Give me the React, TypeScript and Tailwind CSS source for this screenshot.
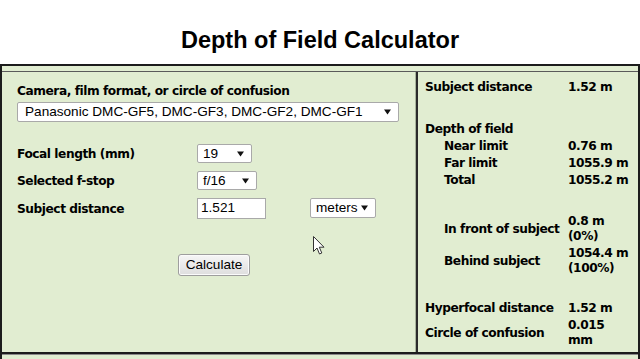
import React from 'react'

const label = "font-['DejaVu_Sans','Verdana',sans-serif] font-bold text-[12.2px] tracking-[-0.45px] text-black"
const ctl = "font-['Liberation_Sans','Arial',sans-serif] font-normal text-[13.6px] tracking-normal text-black"

function Arrow() {
  return (
    <svg width="7" height="6" viewBox="0 0 7 6" className="shrink-0">
      <path d="M0 0.5 H7 L3.5 5.5 Z" fill="#111" />
    </svg>
  )
}

function FakeSelect({ value, w, pl = 5 }: { value: string; w: string; pl?: number }) {
  return (
    <div
      className={`${ctl} ${w} h-full flex items-center justify-between bg-white border border-[#a9a9a9] rounded-[2px] pr-[7px] leading-none`}
      style={{ paddingLeft: pl }}
    >
      <span className="whitespace-nowrap">{value}</span>
      <Arrow />
    </div>
  )
}

function Row({ name, value, indent, h = 'h-[17px]' }: { name: string; value: React.ReactNode; indent?: boolean; h?: string }) {
  return (
    <div className={`flex items-center ${h}`}>
      <div className={`w-[143px] whitespace-nowrap ${indent ? 'pl-[19px]' : ''}`}>{name}</div>
      <div className="leading-[15px] whitespace-nowrap">{value}</div>
    </div>
  )
}

export default function App() {
  return (
    <div className="relative w-[640px] h-[359px] bg-white overflow-hidden">
      {/* 제목 */}
      <div className="h-[64px] pt-[27px] text-center font-['Liberation_Sans','Arial',sans-serif] font-bold text-[23.5px] leading-[26px] text-black">
        Depth of Field Calculator
      </div>

      {/* 계산기 표 */}
      <div className="h-[295px] bg-[#e1edd1] border-x-2 border-t-2 border-[#1c1c1c]">
        <div className="h-[5px]" />
        <div className="h-px bg-[#5a5a5a]" />
        <div className="flex h-[280px]">
          {/* 입력 영역 */}
          <div className={`${label} w-[414px] border-r border-[#a8b49c] pl-[15px] pt-[10px]`}>
            <div className="leading-[16px] pt-[1px] h-[16px]">Camera, film format, or circle of confusion</div>
            <div className="mt-[4px] h-[20px]">
              <FakeSelect value="Panasonic DMC-GF5, DMC-GF3, DMC-GF2, DMC-GF1" w="w-[382px]" pl={7} />
            </div>

            <div className="mt-[22px] flex items-center h-[19px]">
              <div className="w-[180px] pt-[1px]">Focal length (mm)</div>
              <FakeSelect value="19" w="w-[55px]" />
            </div>
            <div className="mt-[8px] flex items-center h-[19px]">
              <div className="w-[180px] pt-[2px]">Selected f-stop</div>
              <FakeSelect value="f/16" w="w-[60px]" />
            </div>
            <div className="mt-[8px] flex items-center h-[21px]">
              <div className="w-[180px] pt-[2px]">Subject distance</div>
              <div className={`${ctl} w-[69px] h-full flex items-center bg-white border border-[#a9a9a9] pl-[3px]`}>1.521</div>
              <div className="ml-[44px] h-[20px] self-start">
                <FakeSelect value="meters" w="w-[66px]" />
              </div>
            </div>

            <div className="mt-[35px] pl-[161px]">
              <button className={`${ctl} w-[72px] h-[22px] rounded-[3px] border border-[#9e9e9e] bg-gradient-to-b from-[#f6f6f6] to-[#dedede] shadow-[inset_0_0_0_1px_#fbfbfb]`}>
                Calculate
              </button>
            </div>
          </div>

          {/* 결과 영역 */}
          <div className={`${label} flex-1 border-l-2 border-[#2a2a2a] pl-[7px] pt-[7px]`}>
            <Row name="Subject distance" value="1.52 m" />
            <div className="h-[24px]" />
            <Row name="Depth of field" value="" h="h-[18px]" />
            <Row name="Near limit" value="0.76 m" indent />
            <Row name="Far limit" value="1055.9 m" indent />
            <Row name="Total" value="1055.2 m" indent />
            <div className="h-[24px]" />
            <Row name="In front of subject" value={<>0.8 m<br />(0%)</>} indent h="h-[32px]" />
            <Row name="Behind subject" value={<>1054.4 m<br />(100%)</>} indent h="h-[32px]" />
            <div className="h-[23px]" />
            <Row name="Hyperfocal distance" value="1.52 m" />
            <Row name="Circle of confusion" value={<>0.015<br />mm</>} h="h-[32px]" />
          </div>
        </div>
        <div className="h-[2px] bg-[#1c1c1c]" />
        <div className="h-px bg-[#8a8a8a]" />
      </div>

      {/* 마우스 커서 */}
      <svg className="absolute left-[313px] top-[236px]" width="13" height="20" viewBox="0 0 13 20">
        <path d="M0.5 0.5 V15.5 L4 12 L6.5 18 L8.8 17 L6.3 11.2 H11 Z" fill="#fff" stroke="#333" strokeWidth="1" strokeLinejoin="round" />
      </svg>
    </div>
  )
}
